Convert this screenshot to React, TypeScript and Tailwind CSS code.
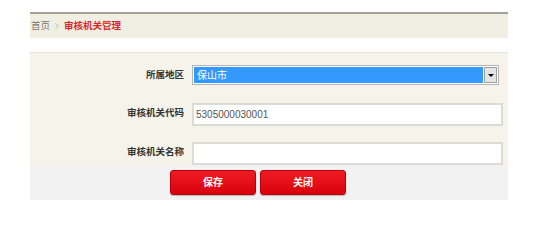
import { ChevronRight } from "lucide-react";

const FONT = { fontFamily: '"Liberation Sans", "Noto Sans CJK SC", sans-serif' };

function FieldRow({ label, children, className = "" }: { label: string; children: React.ReactNode; className?: string }) {
  return (
    <div className={`flex items-center ${className}`}>
      <label className="w-[155px] shrink-0 pr-[1px] text-right text-[9.5px] font-bold text-[#333]">{label}</label>
      <div className="ml-[7px]">{children}</div>
    </div>
  );
}

export default function App() {
  return (
    <div className="h-[200px] w-[560px] bg-white pt-[12px]" style={FONT}>
      <div className="ml-[30px] w-[478px]">
        {/* 面包屑 */}
        <div className="flex h-[26px] items-center border-t-2 border-[#a3a19a] bg-[#f1eee2] pl-[1px] text-[9.5px]">
          <span className="text-[#777]">首页</span>
          <ChevronRight className="mx-[2px] h-[10px] w-[10px] text-[#999]" strokeWidth={1.5} />
          <span className="font-bold text-[#d9262b]">审核机关管理</span>
        </div>

        {/* 表单 */}
        <div className="mt-[14px] border-t border-[#e6e3da] bg-[#f6f3eb] pt-[12px]">
          <FieldRow label="所属地区">
            <div className="flex h-[20px] w-[307px] items-stretch border border-[#b5b5b5] bg-white p-[1px]">
              <div className="flex flex-1 items-center bg-[#3399ff] pl-[3px] text-[10px] text-white">保山市</div>
              <div className="ml-[1px] flex w-[13px] items-center justify-center border border-[#a0a0a0] bg-[#e4e4e4]">
                <span className="block h-0 w-0 border-x-[3px] border-t-[3px] border-x-transparent border-t-black" />
              </div>
            </div>
          </FieldRow>
          <FieldRow label="审核机关代码" className="mt-[16px]">
            <input
              readOnly
              value="5305000030001"
              className="h-[23px] w-[311px] border-2 border-[#dcdcd6] bg-white px-[2px] text-[10px] text-[#555] outline-none"
            />
          </FieldRow>
          <FieldRow label="审核机关名称" className="mt-[14px]">
            <input readOnly value="" className="h-[23px] w-[311px] border-2 border-[#dcdcd6] bg-white px-[2px] text-[10px] text-[#555] outline-none" />
          </FieldRow>
        </div>

        {/* 按钮 */}
        <div className="flex h-[35px] items-center gap-[4px] bg-[#f2f2f2] pl-[140px]">
          <button className="h-[25px] w-[86px] rounded-[3px] border border-[#b8000a] bg-gradient-to-b from-[#f01a22] to-[#d8000c] text-[10px] font-bold text-white shadow-[0_1px_1px_rgba(0,0,0,0.25)]">
            保存
          </button>
          <button className="h-[25px] w-[86px] rounded-[3px] border border-[#b8000a] bg-gradient-to-b from-[#f01a22] to-[#d8000c] text-[10px] font-bold text-white shadow-[0_1px_1px_rgba(0,0,0,0.25)]">
            关闭
          </button>
        </div>
      </div>
    </div>
  );
}
